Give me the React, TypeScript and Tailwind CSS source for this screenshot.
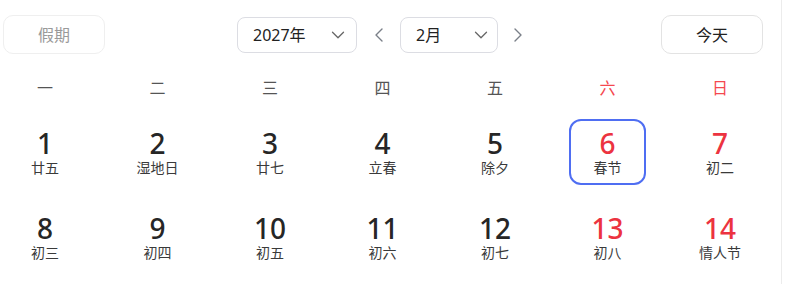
import { ChevronDown, ChevronLeft, ChevronRight } from "lucide-react";

const weekdays = ["一", "二", "三", "四", "五", "六", "日"];

type Day = { n: number; lunar: string; red?: boolean; selected?: boolean };

const rows: Day[][] = [
  [
    { n: 1, lunar: "廿五" },
    { n: 2, lunar: "湿地日" },
    { n: 3, lunar: "廿七" },
    { n: 4, lunar: "立春" },
    { n: 5, lunar: "除夕" },
    { n: 6, lunar: "春节", red: true, selected: true },
    { n: 7, lunar: "初二", red: true },
  ],
  [
    { n: 8, lunar: "初三" },
    { n: 9, lunar: "初四" },
    { n: 10, lunar: "初五" },
    { n: 11, lunar: "初六" },
    { n: 12, lunar: "初七" },
    { n: 13, lunar: "初八", red: true },
    { n: 14, lunar: "情人节", red: true },
  ],
];

function Select({ label, width, pr }: { label: string; width: string; pr: string }) {
  return (
    <div
      className={`flex h-[36px] items-center justify-between rounded-lg border border-[#dcdde3] bg-white pl-[15px] text-[16px] text-[#222] ${width} ${pr}`}
    >
      <span>{label}</span>
      <ChevronDown size={22} strokeWidth={1.4} className="text-[#666]" />
    </div>
  );
}

export default function App() {
  return (
    <div
      className="h-[284px] w-[782px] border-r border-[#ececec] bg-white"
      style={{ fontFamily: '"Noto Sans", "Noto Sans CJK SC", sans-serif' }}
    >
      <div className="flex flex-col pt-[15px]">
        {/* toolbar */}
        <div className="flex h-[39px] items-center">
          <button className="ml-[3px] h-[39px] w-[102px] rounded-[10px] border border-[#efefef] text-[16px] text-[#9a9a9a]">
            假期
          </button>
          <div className="ml-[132px]">
            <Select label="2027年" width="w-[120px]" pr="pr-[7px]" />
          </div>
          <div className="flex w-[43px] justify-center text-[#7a7f88]">
            <ChevronLeft size={24} strokeWidth={1.4} />
          </div>
          <Select label="2月" width="w-[98px]" pr="pr-[5px]" />
          <div className="flex w-[40px] justify-center text-[#7a7f88]">
            <ChevronRight size={24} strokeWidth={1.4} />
          </div>
          <button className="ml-[123px] h-[39px] w-[102px] rounded-[10px] border border-[#e3e3e3] text-[16px] text-[#222]">
            今天
          </button>
        </div>

        {/* weekday header */}
        <div className="mt-[22px] grid grid-cols-[repeat(7,90px)] gap-x-[22.5px]">
          {weekdays.map((w, i) => (
            <div
              key={w}
              className={`text-center text-[16px] leading-[24px] ${i >= 5 ? "text-[#f5484f]" : "text-[#555]"}`}
            >
              {w}
            </div>
          ))}
        </div>

        {/* days */}
        <div className="mt-[19px] flex flex-col gap-y-[19px]">
          {rows.map((row, ri) => (
            <div key={ri} className="grid grid-cols-[repeat(7,90px)] gap-x-[22.5px]">
              {row.map((d) => (
                <div key={d.n} className="flex justify-center">
                  <div
                    className={`flex h-[66px] w-[77px] flex-col items-center justify-center gap-[1px] rounded-[12px] pb-[2px] ${
                      d.selected ? "border-2 border-[#4f6ef2]" : ""
                    }`}
                  >
                    <span
                      className={`text-[28px] font-medium leading-[32px] ${d.red ? "text-[#ec3340]" : "text-[#262626]"}`}
                    >
                      {d.n}
                    </span>
                    <span className="text-[14px] leading-[16px] text-[#3a3a3a]">{d.lunar}</span>
                  </div>
                </div>
              ))}
            </div>
          ))}
        </div>
      </div>
    </div>
  );
}
